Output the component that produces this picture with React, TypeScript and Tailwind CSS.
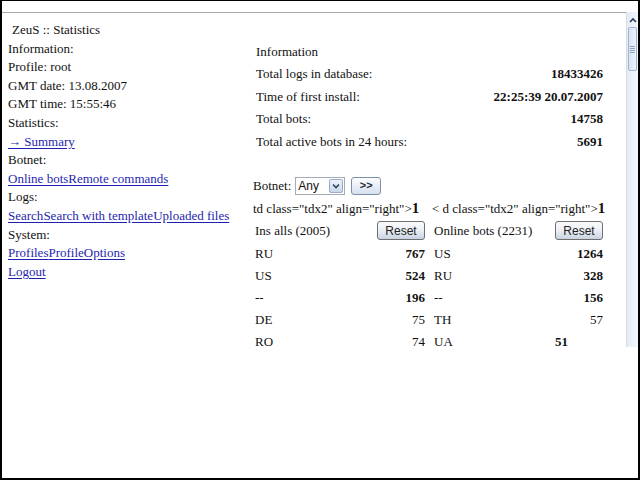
import React from "react";

const info = [
  ["Total logs in database:", "18433426"],
  ["Time of first install:", "22:25:39 20.07.2007"],
  ["Total bots:", "14758"],
  ["Total active bots in 24 hours:", "5691"],
];

const installs: [string, string, boolean][] = [
  ["RU", "767", true],
  ["US", "524", true],
  ["--", "196", true],
  ["DE", "75", false],
  ["RO", "74", false],
];

const online: [string, string, boolean][] = [
  ["US", "1264", true],
  ["RU", "328", true],
  ["--", "156", true],
  ["TH", "57", false],
  ["UA", "51", true],
];

function Link({ children }: { children: React.ReactNode }) {
  return (
    <a href="#" className="text-[#1f1fb0] underline underline-offset-2">
      {children}
    </a>
  );
}

function ResetButton() {
  return (
    <button className="h-[19px] w-[48px] rounded-[3px] border border-[#6f6f6f] bg-gradient-to-b from-[#fbfbfb] via-[#eaeef4] to-[#c9d3e2] font-['Liberation_Sans',Arial,sans-serif] text-[12px] leading-none text-[#222]">
      Reset
    </button>
  );
}

function Scrollbar() {
  return (
    <div className="flex h-[335px] w-[12px] flex-col border-l border-[#d4dce8] bg-gradient-to-r from-[#e4ecf8] to-[#f3f7fd]">
      <div className="flex h-[15px] items-center justify-center">
        <svg width="8" height="6" viewBox="0 0 8 6">
          <path d="M1 5 L4 2 L7 5" fill="none" stroke="#2d3e55" strokeWidth="1.6" />
        </svg>
      </div>
      <div className="mx-[1px] flex h-[44px] items-center justify-center rounded-[2px] border border-[#9db3cf] bg-gradient-to-r from-[#d8e4f4] to-[#eef4fc]">
        <div className="flex flex-col gap-[1px]">
          <div className="h-px w-[5px] bg-[#8ea3bd]" />
          <div className="h-px w-[5px] bg-[#8ea3bd]" />
          <div className="h-px w-[5px] bg-[#8ea3bd]" />
          <div className="h-px w-[5px] bg-[#8ea3bd]" />
        </div>
      </div>
    </div>
  );
}

export default function App() {
  return (
    <div className="flex h-[480px] w-[640px] flex-col overflow-hidden border-x-2 border-t border-b-2 border-black bg-white font-['Liberation_Serif','Times_New_Roman',serif] text-[13px] text-[#111]">
      <div className="h-[11px] shrink-0" />
      <div className="flex flex-1">
        <main className="flex flex-1 border-t border-[#a9a9a9]">
          <div className="w-[251px] shrink-0 pl-[6px] pt-[8px] leading-[18.6px]">
            <div className="pl-[4px]">ZeuS :: Statistics</div>
            <div>Information:</div>
            <div>Profile: root</div>
            <div>GMT date: 13.08.2007</div>
            <div>GMT time: 15:55:46</div>
            <div>Statistics:</div>
            <div>
              <Link>→ Summary</Link>
            </div>
            <div>Botnet:</div>
            <div>
              <Link>Online bots</Link>
              <Link>Remote commands</Link>
            </div>
            <div>Logs:</div>
            <div className="whitespace-nowrap">
              <Link>Search</Link>
              <Link>Search with template</Link>
              <Link>Uploaded files</Link>
            </div>
            <div>System:</div>
            <div>
              <Link>Profiles</Link>
              <Link>Profile</Link>
              <Link>Options</Link>
            </div>
            <div>
              <Link>Logout</Link>
            </div>
          </div>

          <div className="w-[352px] shrink-0 pt-[27px]">
            <div className="pl-[3px] pr-[2px]">
              <div className="flex h-[22.6px] items-center">Information</div>
              {info.map(([label, value]) => (
                <div key={label} className="flex h-[22.6px] items-center justify-between">
                  <span>{label}</span>
                  <span className="font-bold">{value}</span>
                </div>
              ))}
            </div>

            <div className="h-[22px]" />

            <div className="flex h-[22px] items-center">
              <span>Botnet:</span>
              <div className="ml-[4px] flex h-[18px] w-[50px] items-center border border-[#a5acb5] bg-white">
                <span className="flex-1 pl-[2px] font-['Liberation_Sans',Arial,sans-serif] text-[12px] leading-none">Any</span>
                <div className="mr-[1px] flex h-[14px] w-[14px] items-center justify-center rounded-[2px] border border-[#98aac4] bg-gradient-to-b from-[#eef3fb] to-[#c8d6ea]">
                  <svg width="8" height="6" viewBox="0 0 8 6">
                    <path d="M1 1.5 L4 4.5 L7 1.5" fill="none" stroke="#33475f" strokeWidth="1.6" />
                  </svg>
                </div>
              </div>
              <button className="ml-[6px] flex h-[18px] w-[30px] items-center justify-center rounded-[3px] border border-[#7c8fa8] bg-gradient-to-b from-[#fdfdfe] to-[#d6e0ee] font-['Liberation_Sans',Arial,sans-serif] text-[11px] font-bold leading-none text-[#1d2b3c]">
                &gt;&gt;
              </button>
            </div>

            <div className="flex h-[22px] items-center whitespace-nowrap">
              <div className="w-[179px] shrink-0">
                td class="tdx2" align="right"&gt;<span className="text-[15px] font-bold">1</span>
              </div>
              <div>
                &lt; d class="tdx2" align="right"&gt;<span className="text-[15px] font-bold">1</span>
              </div>
            </div>

            <div className="flex">
              <div className="w-[179px] pr-[7px]">
                <div className="flex h-[24px] items-center justify-between pl-[2px]">
                  <span>Ins alls (2005)</span>
                  <ResetButton />
                </div>
                {installs.map(([c, n, b]) => (
                  <div key={c + n} className="flex h-[22px] items-center justify-between pl-[2px]">
                    <span>{c}</span>
                    <span className={b ? "font-bold" : ""}>{n}</span>
                  </div>
                ))}
              </div>
              <div className="w-[173px] pr-[2px]">
                <div className="flex h-[24px] items-center justify-between pl-[2px]">
                  <span>Online bots (2231)</span>
                  <ResetButton />
                </div>
                {online.map(([c, n, b]) => (
                  <div key={c + n} className="flex h-[22px] items-center justify-between pl-[2px]">
                    <span>{c}</span>
                    <span className={(b ? "font-bold " : "") + (n === "51" ? "mr-[35px]" : "")}>{n}</span>
                  </div>
                ))}
              </div>
            </div>
          </div>
        </main>
        <Scrollbar />
      </div>
    </div>
  );
}
